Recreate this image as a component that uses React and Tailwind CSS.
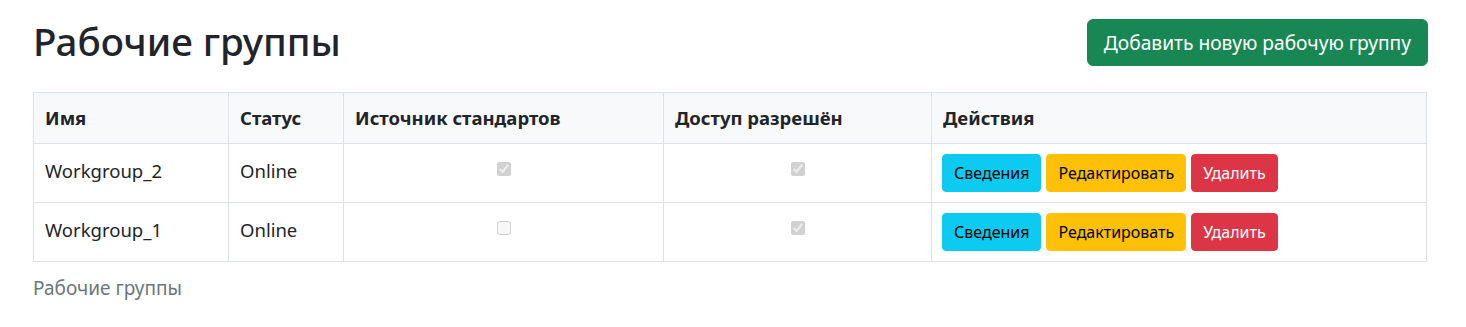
import React from "react";

const rows = [
  { name: "Workgroup_2", status: "Online", src: true, access: true },
  { name: "Workgroup_1", status: "Online", src: false, access: true },
];

function Check({ checked }) {
  return (
    <input
      type="checkbox"
      disabled
      readOnly
      checked={checked}
      className="w-[14px] h-[14px] m-0 align-middle"
    />
  );
}

const th = "border border-[#dee2e6] text-left font-bold px-[11px] py-[13px]";
const td = "border border-[#dee2e6] px-[11px]";

export default function App() {
  return (
    <div
      className="w-[1466px] h-[327px] bg-white text-[#212529] pl-[33px] pr-[38px] pt-[17px]"
      style={{ fontFamily: '"Noto Sans", "Open Sans", sans-serif' }}
    >
      <div className="flex items-start justify-between mb-[26px]">
        <h1 className="text-[38.5px] leading-[48px] font-medium m-0">Рабочие группы</h1>
        <button className="mt-[2px] bg-[#198754] text-white text-[19.2px] leading-[29px] px-[16px] py-[8px] rounded-[6px] border border-[#198754]">
          Добавить новую рабочую группу
        </button>
      </div>
      <table className="w-[1394px] border-collapse text-[18.5px] leading-[24px]">
        <thead>
          <tr className="bg-[#f8f9fa]">
            <th className={`${th} w-[195px]`}>Имя</th>
            <th className={`${th} w-[115px]`}>Статус</th>
            <th className={`${th} w-[320px]`}>Источник стандартов</th>
            <th className={`${th} w-[268px]`}>Доступ разрешён</th>
            <th className={th}>Действия</th>
          </tr>
        </thead>
        <tbody>
          {rows.map((r) => (
            <tr key={r.name}>
              <td className={`${td} pt-[8px] pb-[12px] align-middle`}>{r.name}</td>
              <td className={`${td} pt-[8px] pb-[12px] align-middle`}>{r.status}</td>
              <td className={`${td} py-[10px] align-top text-center`}>
                <div className="pt-[4px] leading-none"><Check checked={r.src} /></div>
              </td>
              <td className={`${td} py-[10px] align-top text-center`}>
                <div className="pt-[4px] leading-none"><Check checked={r.access} /></div>
              </td>
              <td className="border border-[#dee2e6] px-[10px] py-[10px] align-middle text-[16px]">
                <div className="flex gap-[5px]">
                  <button className="bg-[#0dcaf0] text-black px-[11px] py-[6px] leading-[24px] rounded-[4px] border border-[#0dcaf0]">Сведения</button>
                  <button className="bg-[#ffc107] text-black px-[11px] py-[6px] leading-[24px] rounded-[4px] border border-[#ffc107]">Редактировать</button>
                  <button className="bg-[#dc3545] text-white px-[11px] py-[6px] leading-[24px] rounded-[4px] border border-[#dc3545]">Удалить</button>
                </div>
              </td>
            </tr>
          ))}
        </tbody>
      </table>
      <div className="pt-[14px] text-[19px] leading-[24px] text-[#6c757d]">Рабочие группы</div>
    </div>
  );
}
